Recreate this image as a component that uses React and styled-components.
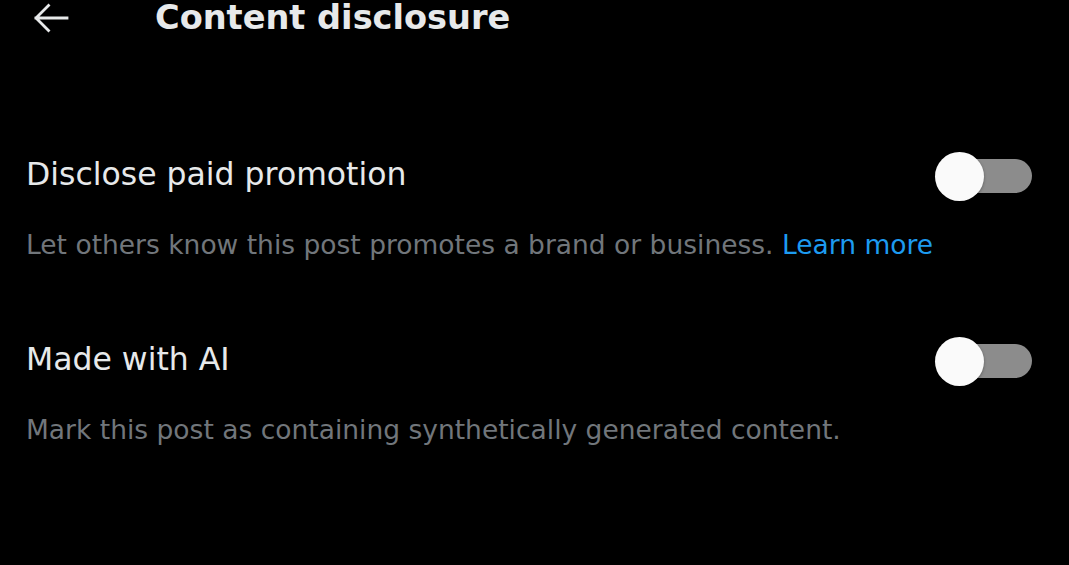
import React, { useState } from "react";
import styled, { createGlobalStyle } from "styled-components";

const Global = createGlobalStyle`
  html, body { margin: 0; padding: 0; background: #000; }
  body { font-family: "DejaVu Sans", "Inter", sans-serif; color: #e7e9ea; }
`;

const Page = styled.div`
  width: 1069px;
  height: 565px;
  background: #000;
  overflow: hidden;
  display: flex;
  flex-direction: column;
`;

const Header = styled.header`
  display: flex;
  align-items: center;
  height: 34px;
  padding-left: 33px;
  gap: 86px;
`;

const BackButton = styled.button`
  background: none;
  border: 0;
  padding: 2px 0 0;
  width: 36px;
  height: 34px;
  display: flex;
  align-items: center;
  justify-content: center;
  color: #e7e9ea;
  cursor: pointer;
`;

const Title = styled.h1`
  margin: 0;
  font-size: 33.6px;
  font-weight: 700;
  line-height: 34px;
  padding-top: 1px;
  color: #e7e9ea;
  white-space: nowrap;
`;

const List = styled.div`
  display: flex;
  flex-direction: column;
  padding: 117px 37px 0 26px;
  gap: 75px;
`;

const Item = styled.div`
  display: flex;
  flex-direction: column;
  gap: 28px;
`;

const ItemTop = styled.div`
  display: flex;
  align-items: center;
  justify-content: space-between;
  height: 50px;
`;

const ItemTitle = styled.div`
  font-size: 31.5px;
  line-height: 36px;
  padding-bottom: 5px;
  font-weight: 400;
  color: #e7e9ea;
`;

const ItemDesc = styled.div`
  font-size: 26.5px;
  line-height: 32px;
  color: #71767b;
`;

const Link = styled.a`
  color: #1d9bf0;
  text-decoration: none;
`;

const Track = styled.button`
  position: relative;
  width: 87px;
  height: 34px;
  border-radius: 17px;
  border: 0;
  padding: 0;
  background: ${(p) => (p.$on ? "#1d9bf0" : "#8c8c8c")};
  cursor: pointer;
`;

const Thumb = styled.span`
  position: absolute;
  top: 50%;
  left: ${(p) => (p.$on ? "48px" : "-10px")};
  width: 49px;
  height: 49px;
  margin-top: -24.5px;
  border-radius: 50%;
  background: #fafafa;
  box-shadow: 0 1px 3px rgba(0, 0, 0, 0.35);
`;

function Toggle() {
  const [on, setOn] = useState(false);
  return (
    <Track $on={on} onClick={() => setOn(!on)} aria-pressed={on}>
      <Thumb $on={on} />
    </Track>
  );
}

export default function App() {
  return (
    <>
      <Global />
      <Page>
        <Header>
          <BackButton aria-label="Back">
            <svg width="36" height="30" viewBox="0 0 36 30" fill="none">
              <path d="M34 15H3M15.5 2.5L3 15l12.5 12.5" stroke="#e7e9ea" strokeWidth="2.8" strokeLinecap="square" />
            </svg>
          </BackButton>
          <Title>Content disclosure</Title>
        </Header>
        <List>
          <Item>
            <ItemTop>
              <ItemTitle>Disclose paid promotion</ItemTitle>
              <Toggle />
            </ItemTop>
            <ItemDesc>
              Let others know this post promotes a brand or business. <Link href="#">Learn more</Link>
            </ItemDesc>
          </Item>
          <Item>
            <ItemTop>
              <ItemTitle>Made with AI</ItemTitle>
              <Toggle />
            </ItemTop>
            <ItemDesc>Mark this post as containing synthetically generated content.</ItemDesc>
          </Item>
        </List>
      </Page>
    </>
  );
}
